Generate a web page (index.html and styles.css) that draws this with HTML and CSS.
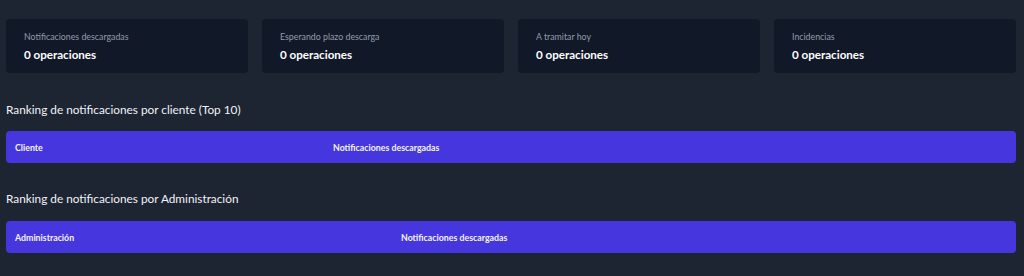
FILE: index.html
```html
<!DOCTYPE html>
<html lang="es">

<head>
    <meta charset="UTF-8">
    <meta name="viewport" content="width=device-width, initial-scale=1.0">
    <title>Panel de notificaciones</title>
    <link rel="stylesheet" href="styles.css">
</head>

<body>

    <div class="stats">
        <div class="stat-card">
            <p class="stat-label">Notificaciones descargadas</p>
            <p class="stat-value">0 operaciones</p>
        </div>
        <div class="stat-card">
            <p class="stat-label">Esperando plazo descarga</p>
            <p class="stat-value">0 operaciones</p>
        </div>
        <div class="stat-card">
            <p class="stat-label">A tramitar hoy</p>
            <p class="stat-value">0 operaciones</p>
        </div>
        <div class="stat-card">
            <p class="stat-label">Incidencias</p>
            <p class="stat-value">0 operaciones</p>
        </div>
    </div>

    <section class="ranking">
        <h3>Ranking de notificaciones por cliente (Top 10)</h3>
        <table class="ranking-table">
            <thead>
                <tr>
                    <th class="col-client">Cliente</th>
                    <th>Notificaciones descargadas</th>
                </tr>
            </thead>
            <tbody></tbody>
        </table>
    </section>

    <section class="ranking">
        <h3>Ranking de notificaciones por Administración</h3>
        <table class="ranking-table">
            <thead>
                <tr>
                    <th class="col-admin">Administración</th>
                    <th>Notificaciones descargadas</th>
                </tr>
            </thead>
            <tbody></tbody>
        </table>
    </section>

</body>

</html>
```

FILE: styles.css
```css
/* General Styles */
* {
    margin: 0;
    padding: 0;
    box-sizing: border-box;
    font-family: Lato, "Noto Sans", sans-serif;
}

body {
    background-color: #1d2432;
    color: #f1f3f7;
    padding: 19px 8px 0 6px;
}

/* Stat cards */
.stats {
    display: grid;
    grid-template-columns: repeat(4, 1fr);
    gap: 14px;
}

.stat-card {
    background: #111827;
    border-radius: 4px;
    height: 54px;
    padding: 12px 18px 0;
}

.stat-label {
    font-size: 8.8px;
    line-height: 12px;
    color: #939cae;
}

.stat-value {
    margin-top: 4px;
    font-size: 11.6px;
    line-height: 16px;
    font-weight: bold;
    color: #ffffff;
}

/* Ranking tables */
.ranking {
    margin-top: 29px;
}

.ranking + .ranking {
    margin-top: 28px;
}

.ranking h3 {
    font-size: 11.8px;
    line-height: 16px;
    font-weight: normal;
    color: #f1f3f7;
    margin-bottom: 13px;
}

.ranking + .ranking h3 {
    margin-bottom: 14px;
}

.ranking-table {
    width: 100%;
    border-collapse: separate;
    border-spacing: 0;
    background: #4536de;
    border-radius: 4px;
}

.ranking-table th {
    height: 32px;
    padding: 0 9px;
    text-align: left;
    font-size: 8.8px;
    font-weight: bold;
    color: #f4f2ff;
}

.col-client {
    width: 318px;
}

.col-admin {
    width: 386px;
}
```
